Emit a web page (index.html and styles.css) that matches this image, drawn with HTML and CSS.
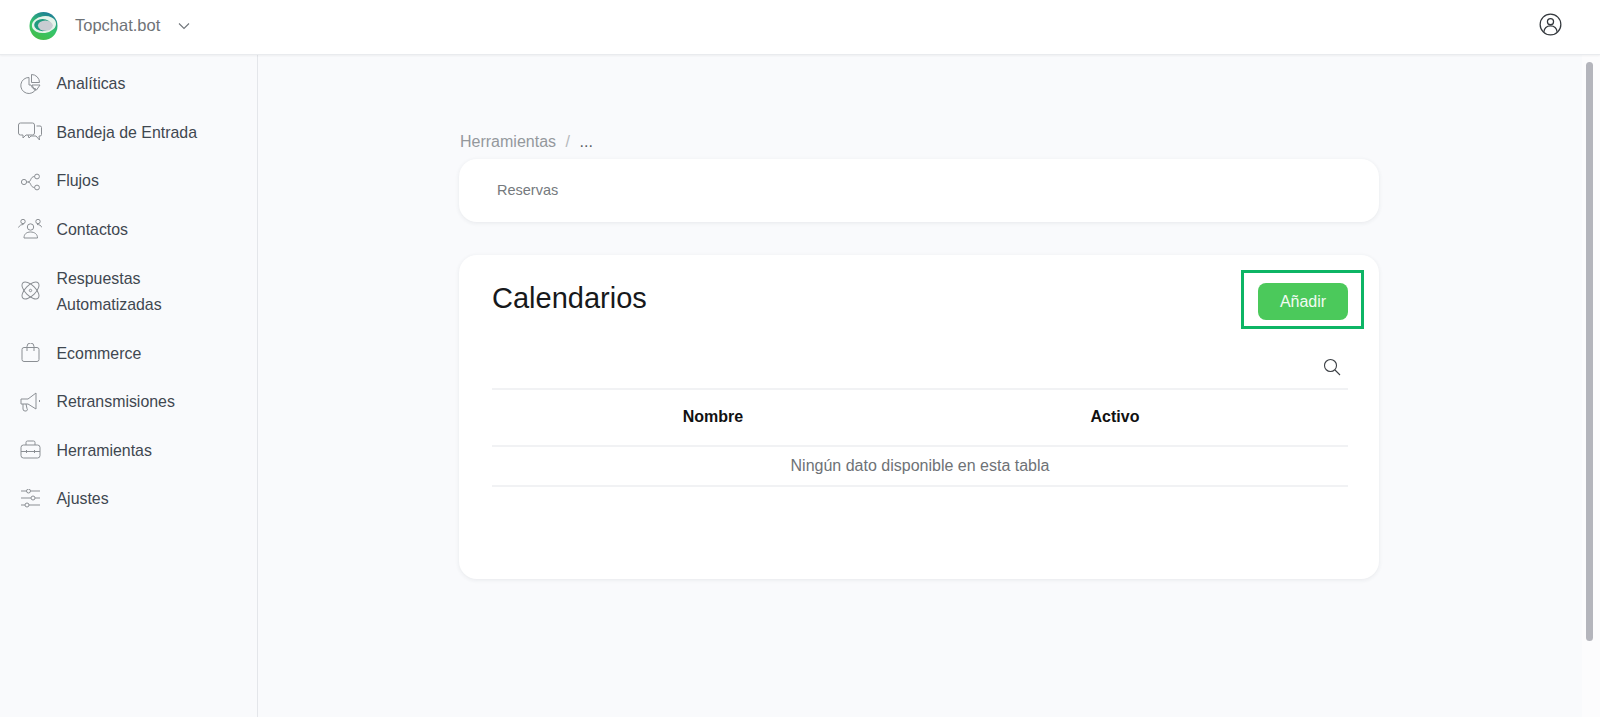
FILE: index.html
```html
<!DOCTYPE html>
<html lang="es">
<head>
<meta charset="utf-8">
<title>Calendarios</title>
<link rel="stylesheet" href="styles.css">
</head>
<body>
<header class="topbar">
  <div class="brand">
    <svg class="logo" viewBox="0 0 30 30" width="29" height="28">
      <defs>
        <linearGradient id="lg" x1="0.2" y1="1" x2="0.6" y2="0">
          <stop offset="0" stop-color="#46bd45"/><stop offset=".5" stop-color="#35c46c"/><stop offset="1" stop-color="#1d7f95"/>
        </linearGradient>
      </defs>
      <circle cx="15" cy="15" r="15" fill="url(#lg)"/>
      <ellipse cx="15.500" cy="13.500" rx="13" ry="9" fill="#e6f3ea" transform="rotate(-8 15.500 13.500)"/>
      <ellipse cx="14" cy="14" rx="9" ry="6.500" fill="#1f9a7e"/>
      <ellipse cx="17" cy="14.500" rx="8" ry="5.500" fill="#c8ccd2"/>
    </svg>
    <span class="brand-name">Topchat.bot</span>
    <svg class="chev" viewBox="0 0 12 8" width="12" height="8"><path d="M1 1.500 6 6.500 11 1.500"/></svg>
  </div>
  <svg class="user" viewBox="0 0 24 24" width="23" height="23">
    <circle cx="12" cy="12" r="10.800"/><circle cx="12" cy="9" r="3.200"/><path d="M5 20c.6-4.500 3.600-6.500 7-6.500s6.400 2 7 6.500"/>
  </svg>
</header>
<div class="shell">
  <nav class="sidebar">
    <a class="item">
      <svg viewBox="0 0 22 22"><path d="M10 3.500a8 8 0 1 0 7 11.500l-3.500-1-1.500-3H10Z"/><path d="M12.500.5a8 8 0 0 1 8 8h-8Z"/><path d="M13 11h8l-3.500 5h-2Z"/></svg>
      <span>Analíticas</span>
    </a>
    <a class="item">
      <svg viewBox="0 0 24 22"><path d="M2.500 1h12a2 2 0 0 1 2 2v8a2 2 0 0 1-2 2H8l-3 3v-3H2.500a2 2 0 0 1-2-2V3a2 2 0 0 1 2-2Z"/><path d="M18.500 4H22a1.500 1.500 0 0 1 1.500 1.500v7A1.500 1.500 0 0 1 22 14h-1l.5 4-3.500-4h-5l-2 2-1-3"/></svg>
      <span>Bandeja de Entrada</span>
    </a>
    <a class="item">
      <svg viewBox="0 0 22 22"><circle cx="5" cy="11" r="2.600"/><circle cx="18" cy="5.500" r="2.400"/><circle cx="18" cy="16.500" r="2.400"/><path d="M7.600 11h1.400c3.500 0 2-5.500 6.600-5.500M9 11c3.500 0 2 5.500 6.600 5.500"/></svg>
      <span>Flujos</span>
    </a>
    <a class="item">
      <svg viewBox="0 0 24 22"><circle cx="5" cy="2.500" r="2.200"/><circle cx="20" cy="2.500" r="2.200"/><circle cx="12.500" cy="8" r="3.200"/><path d="M.5 8.500c1-2 2.500-3 5-3M24 8.500c-1-2-2.500-3-5-3"/><path d="M6 19c0-4 2.500-6 6.500-6s7 2 7 6Z"/></svg>
      <span>Contactos</span>
    </a>
    <a class="item item-double">
      <svg viewBox="0 0 22 22"><ellipse cx="11.500" cy="9.500" rx="10.800" ry="5.200" transform="rotate(45 11.500 9.500)"/><ellipse cx="11.500" cy="9.500" rx="10.800" ry="5.200" transform="rotate(-45 11.500 9.500)"/><circle cx="11.500" cy="9.500" r="1.200"/></svg>
      <span>Respuestas Automatizadas</span>
    </a>
    <a class="item">
      <svg viewBox="0 0 22 22"><rect x="3" y="4.500" width="17" height="14" rx="2"/><path d="M8 8V3.500a3.500 3.500 0 0 1 7 0V8"/></svg>
      <span>Ecommerce</span>
    </a>
    <a class="item">
      <svg viewBox="0 0 22 22"><path d="M2 7h7l8-6v16l-8-5H2Z"/><path d="M4 12v5a2 2 0 0 0 2 2h1a1.500 1.500 0 0 0 1-2.500L7 12"/><path d="M20.500 8v2"/></svg>
      <span>Retransmisiones</span>
    </a>
    <a class="item">
      <svg viewBox="0 0 22 22"><rect x="2" y="5" width="19" height="13" rx="2.500"/><path d="M7 5V2.500A1.500 1.500 0 0 1 8.500 1h6A1.500 1.500 0 0 1 16 2.500V5"/><path d="M2 11.500h19M7.500 10v3M15.500 10v3"/></svg>
      <span>Herramientas</span>
    </a>
    <a class="item">
      <svg viewBox="0 0 22 22"><path d="M2 2h5.500M11.500 2H21M2 9h10M16 9h5M2 16h4M10 16h11"/><circle cx="9.500" cy="2" r="2"/><circle cx="14" cy="9" r="2"/><circle cx="8" cy="16" r="2"/></svg>
      <span>Ajustes</span>
    </a>
  </nav>
  <main class="main">
    <div class="content">
      <div class="crumbs"><span class="crumb">Herramientas</span><span class="sep">/</span><span class="here">...</span></div>
      <div class="card tabs"><span class="tab">Reservas</span></div>
      <section class="card panel">
        <div class="panel-head">
          <h1>Calendarios</h1>
          <div class="btn-wrap">
            <button class="btn">Añadir</button>
            <span class="highlight"></span>
          </div>
        </div>
        <div class="search">
          <svg viewBox="0 0 18 18" width="18" height="18"><circle cx="7.500" cy="7.500" r="6"/><path d="m12 12 5 5"/></svg>
        </div>
        <table class="table">
          <thead>
            <tr><th class="c1">Nombre</th><th class="c2">Activo</th><th class="c3"></th></tr>
          </thead>
          <tbody>
            <tr><td colspan="3">Ningún dato disponible en esta tabla</td></tr>
          </tbody>
        </table>
      </section>
    </div>
  </main>
  <div class="scrolltrack"><div class="thumb"></div></div>
</div>
</body>
</html>
```
FILE: styles.css
```css
* { box-sizing: border-box; }
html, body { height: 100%; }
body {
  margin: 0;
  height: 717px;
  overflow: hidden;
  display: flex;
  flex-direction: column;
  font-family: "Liberation Sans", Arial, sans-serif;
  background: #f9fafc;
  color: #3f4750;
}
.topbar {
  height: 55px;
  flex: none;
  display: flex;
  align-items: center;
  justify-content: space-between;
  padding: 0 38px 3px 29px;
  background: #fff;
  border-bottom: 1px solid #e9ebee;
  box-shadow: 0 1px 2px rgba(0,0,0,.05);
  position: relative;
}
.brand { display: flex; align-items: center; }
.logo { display: block; }
.brand-name { margin-left: 17px; font-size: 16.500px; color: #6f7377; }
.chev { margin-left: 18px; fill: none; stroke: #70757a; stroke-width: 1.100; }
.user { fill: none; stroke: #33383d; stroke-width: 1.300; margin-top: -3px; }
.shell { flex: 1; display: flex; min-height: 0; }
.sidebar {
  width: 258px;
  flex: none;
  border-right: 1px solid #e4e6ea;
  padding-top: 5.500px;
}
.item {
  display: flex;
  align-items: center;
  padding: 0 20px 0 18px;
  min-height: 48.500px;
  font-size: 15.900px;
  line-height: 26.700px;
  color: #3f4750;
}
.item-double { min-height: 75.500px; }
.item svg {
  width: 24px;
  height: 22px;
  flex: none;
  fill: none;
  stroke: #8b8f94;
  stroke-width: 1;
}
.item span { margin-left: 14.500px; }
.item-double span { width: 150px; }
.main { flex: 1; min-width: 0; padding: 74px 2px 0 0; }
.content { width: 920px; margin: 0 auto; }
.crumbs { display: flex; align-items: center; height: 26px; padding-left: 1px; font-size: 16px; }
.crumb { color: #94989c; }
.sep { color: #b5b8bb; margin: 0 9.500px; }
.here { color: #5a5f64; }
.card {
  background: #fff;
  border-radius: 18px;
  box-shadow: 0 1px 4px rgba(40,50,70,.09);
}
.tabs { height: 63px; display: flex; align-items: center; padding: 0 38px; margin-top: 4px; }
.tab { font-size: 14.500px; color: #75797d; margin-top: -1px; }
.panel { height: 324px; margin-top: 33px; padding: 28px 31px 0 33px; }
.panel-head {
  display: flex;
  justify-content: space-between;
  align-items: flex-start;
  height: 37px;
}
h1 { margin: 0; font-size: 29px; font-weight: 400; line-height: 29px; color: #17191b; padding-top: 1px; }
.btn-wrap { position: relative; }
.btn {
  display: block;
  width: 90px;
  height: 37px;
  border: 0;
  border-radius: 8px;
  background: #4bc95b;
  color: #f2fbf3;
  font: 16px "Liberation Sans", Arial, sans-serif;
}
.highlight {
  position: absolute;
  top: -13px;
  left: -17px;
  right: -16px;
  bottom: -9px;
  border: 3px solid #0db565;
  pointer-events: none;
}
.search { display: flex; justify-content: flex-end; height: 68px; padding: 38px 7px 0 0; }
.search svg { fill: none; stroke: #3b3f44; stroke-width: 1.100; }
.table { width: 856px; border-collapse: collapse; table-layout: fixed; font-size: 16px; }
.table th, .table td { text-align: center; padding: 0; }
.table th { height: 57px; padding-bottom: 2px; color: #111; font-weight: 700; border-top: 2px solid #f1f2f4; border-bottom: 2px solid #f1f2f4; }
.table td { height: 40px; color: #6e7276; border-bottom: 2px solid #f1f2f4; }
.c1 { width: 442px; }
.c2 { width: 362px; }
.c3 { width: 52px; }
.scrolltrack { width: 18px; flex: none; background: #fcfcfd; padding: 7px 7px 0 4px; }
.thumb { height: 579px; border-radius: 4px; background: #b4b5bc; }
```
